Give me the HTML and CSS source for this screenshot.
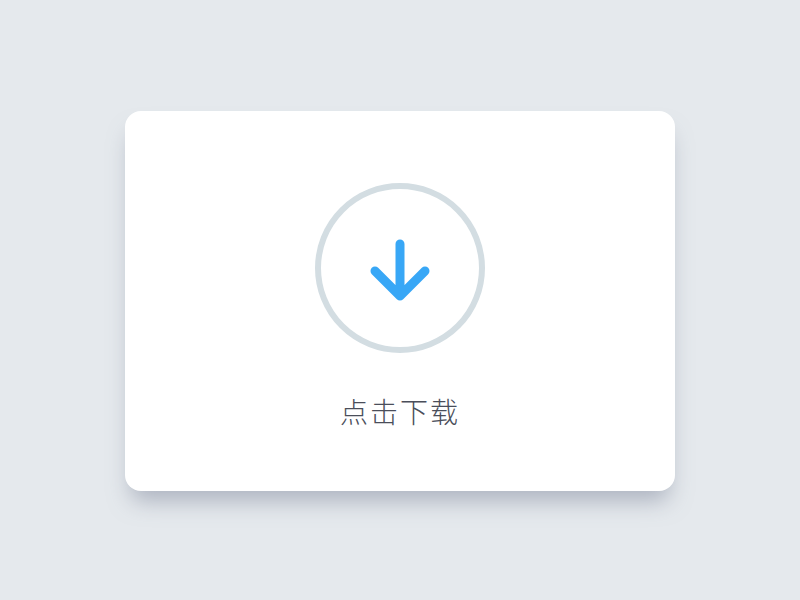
FILE: index.html
```html
<!DOCTYPE html>
<html lang="zh-CN">
<head>
    <meta charset="UTF-8">
    <meta name="viewport" content="width=device-width, initial-scale=1.0">
    <title>点击下载</title>
    <link rel="stylesheet" href="styles.css">
</head>
<body>
    <main class="card">
        <svg class="download-icon" width="170" height="170" viewBox="0 0 170 170">
            <circle cx="85" cy="85" r="82" fill="none" stroke="#d3dde2" stroke-width="6"/>
            <path d="M85 61 V113 M60 88 L85 113 L110 88" fill="none" stroke="#38a7f6" stroke-width="9" stroke-linecap="round" stroke-linejoin="round"/>
        </svg>
        <p class="label">点击下载</p>
    </main>
</body>
</html>
```

FILE: styles.css
```css
body {
    margin: 0;
    height: 600px;
    background-color: #e5e9ed;
    display: flex;
    align-items: center;
    justify-content: center;
    font-family: "Noto Sans CJK SC", "Noto Sans", sans-serif;
}

.card {
    width: 550px;
    height: 380px;
    margin-top: 2px;
    box-sizing: border-box;
    padding-top: 72px;
    background-color: #fff;
    border-radius: 16px;
    box-shadow: 0 16px 22px -6px rgba(120, 128, 150, 0.5);
    display: flex;
    flex-direction: column;
    align-items: center;
}

.download-icon {
    display: block;
}

.label {
    margin: 44px 0 0;
    font-size: 28px;
    font-weight: 300;
    line-height: 1;
    letter-spacing: 2px;
    color: #4a4e5a;
}
```
